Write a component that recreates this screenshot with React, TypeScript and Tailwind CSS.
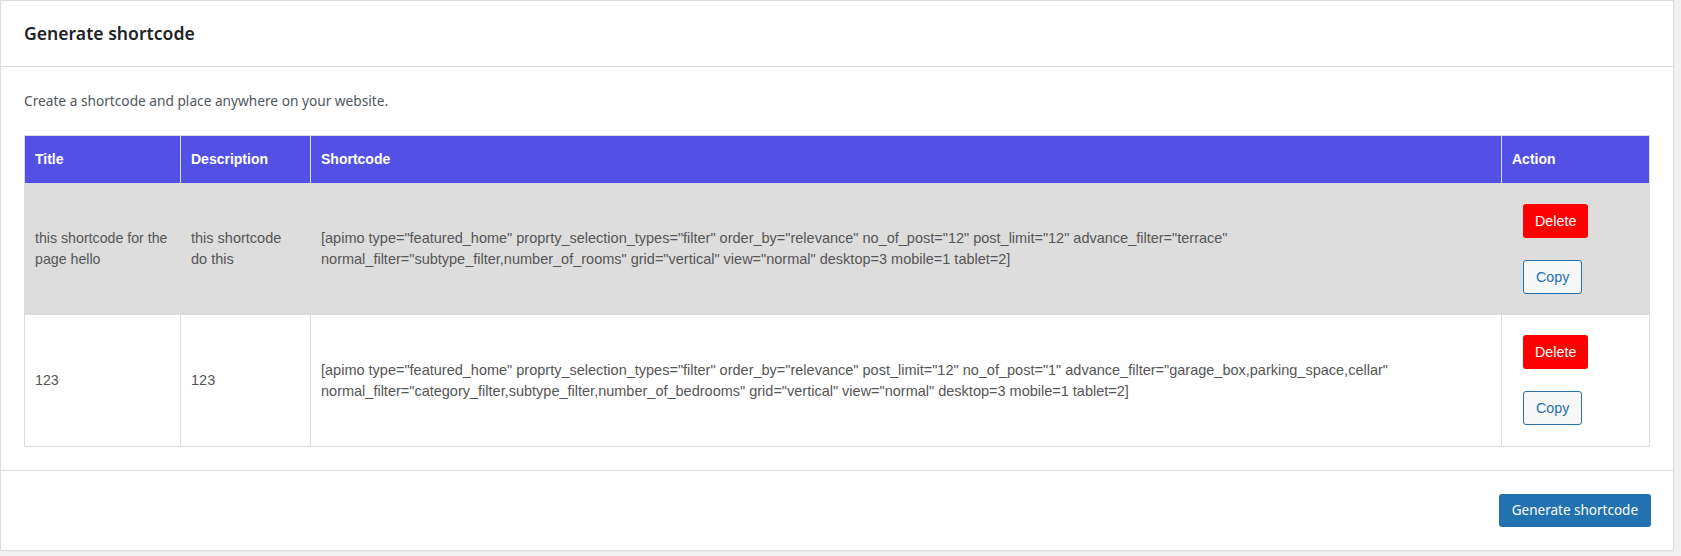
import React from "react";

const rows = [
  {
    title: "this shortcode for the page hello",
    desc: "this shortcode do this",
    code: '[apimo type="featured_home" proprty_selection_types="filter" order_by="relevance" no_of_post="12" post_limit="12" advance_filter="terrace" normal_filter="subtype_filter,number_of_rooms" grid="vertical" view="normal" desktop=3 mobile=1 tablet=2]',
    bg: "bg-[#dddddd]",
    pad: "pt-[20px] pb-[20px]",
  },
  {
    title: "123",
    desc: "123",
    code: '[apimo type="featured_home" proprty_selection_types="filter" order_by="relevance" post_limit="12" no_of_post="1" advance_filter="garage_box,parking_space,cellar" normal_filter="category_filter,subtype_filter,number_of_bedrooms" grid="vertical" view="normal" desktop=3 mobile=1 tablet=2]',
    bg: "bg-white",
    pad: "pt-[20px] pb-[21px]",
  },
];

export default function App() {
  return (
    <div className="w-full min-h-[556px] bg-[#f0f0f1] pr-[7px] pb-[7px]">
      <div className="bg-white border border-[#dcdcde]">
        <div className="h-[66px] flex items-center px-[23px] border-b border-[#dcdcde]">
          <h2 className="text-[17.6px] font-semibold text-[#1d2327] [font-family:'Noto_Sans',sans-serif] leading-none">
            Generate shortcode
          </h2>
        </div>
        <div className="px-[23px] pt-[24px] pb-[23px]">
          <p className="text-[13.7px] leading-[20px] text-[#50575e] mb-[24px] [font-family:'Noto_Sans',sans-serif]">
            Create a shortcode and place anywhere on your website.
          </p>
          <table className="w-full table-fixed border-collapse border border-[#dcdcde] [font-family:'Liberation_Sans',Arial,sans-serif] text-[14.5px]">
            <colgroup>
              <col className="w-[156px]" />
              <col className="w-[130px]" />
              <col />
              <col className="w-[148px]" />
            </colgroup>
            <thead>
              <tr className="bg-[#5350e5] text-white text-[14px]">
                <th className="h-[48px] px-[10px] text-left font-bold border border-[#dcdcde]">Title</th>
                <th className="h-[48px] px-[10px] text-left font-bold border border-[#dcdcde]">Description</th>
                <th className="h-[48px] px-[10px] text-left font-bold border border-[#dcdcde]">Shortcode</th>
                <th className="h-[48px] px-[10px] text-left font-bold border border-[#dcdcde]">Action</th>
              </tr>
            </thead>
            <tbody>
              {rows.map((r, i) => (
                <tr key={i} className={r.bg}>
                  <td className="px-[10px] align-middle leading-[21px] text-[14.2px] text-[#555555] border border-[#dcdcde]">{r.title}</td>
                  <td className="px-[10px] align-middle leading-[21px] text-[#555555] border border-[#dcdcde]">{r.desc}</td>
                  <td className="px-[10px] align-middle leading-[21px] text-[#555555] border border-[#dcdcde]">{r.code}</td>
                  <td className={`px-[10px] ${r.pad} align-middle border border-[#dcdcde]`}>
                    <div className="flex flex-col items-start gap-[22px] pl-[11px]">
                      <button className="h-[34px] px-[12px] rounded-[3px] bg-[#ff0000] text-white text-[14.3px] leading-none">
                        Delete
                      </button>
                      <button className="h-[34px] px-[12px] rounded-[3px] border border-[#2271b1] bg-[#f6f7f7] text-[#2271b1] text-[14.3px] leading-none">
                        Copy
                      </button>
                    </div>
                  </td>
                </tr>
              ))}
            </tbody>
          </table>
        </div>
        <div className="border-t border-[#dcdcde] flex justify-end px-[22px] pt-[23px] pb-[23px]">
          <button className="h-[33px] px-[13px] rounded-[3px] bg-[#2271b1] text-white text-[13.5px] [font-family:'Noto_Sans',sans-serif] leading-none">
            Generate shortcode
          </button>
        </div>
      </div>
    </div>
  );
}
